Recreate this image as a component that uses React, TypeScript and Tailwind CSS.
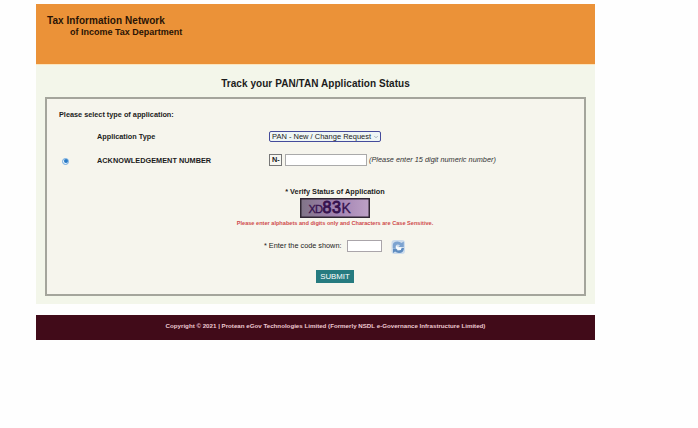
import React, { useState } from 'react';
import { ChevronDown } from 'lucide-react';

function Header() {
  return (
    <header className="h-[60px] bg-[#eb9238] pl-[11px] pt-[11px] font-bold text-[#2a1405]">
      <div className="h-[12px] text-[10px] leading-[12px] tracking-[0.06px] whitespace-nowrap">Tax Information Network</div>
      <div className="pl-[23px] text-[9px] leading-[11px] whitespace-nowrap">of Income Tax Department</div>
    </header>
  );
}

function Captcha() {
  return (
    <svg width="70" height="20" viewBox="0 0 70 20" className="block">
      <defs>
        <linearGradient id="captcha" x1="0" x2="1">
          <stop offset="0" stopColor="#807487" />
          <stop offset="0.5" stopColor="#a080b0" />
          <stop offset="1" stopColor="#bda1c6" />
        </linearGradient>
      </defs>
      <rect x="0.75" y="0.75" width="68.5" height="18.5" fill="url(#captcha)" stroke="#302633" strokeWidth="1.5" />
      <text y="14.5" fill="#36124f" stroke="#36124f" strokeWidth="0.3" fontFamily="Liberation Sans Narrow, Liberation Sans">
        <tspan x="8.5" fontSize="11">X</tspan>
        <tspan x="15" fontSize="11">D</tspan>
        <tspan x="22.5" y="15" fontSize="16" strokeWidth="0.9">8</tspan>
        <tspan x="32" y="15" fontSize="16" strokeWidth="0.9">3</tspan>
        <tspan x="41.5" y="14.5" fontSize="14">K</tspan>
      </text>
    </svg>
  );
}

function RefreshIcon() {
  return (
    <svg width="15" height="16" viewBox="0 0 15 16" className="block">
      <rect x="0.5" y="1" width="13.5" height="14" rx="3" fill="#cddcec" />
      <path d="M1.8 9V6Q2 2.5 6.5 2.5Q9 2.5 10.5 4L12.8 2.4V8H7.6L9 6.3Q8 5.4 6.7 5.4Q4.6 5.4 4.6 7.5V9Z" fill="#7da3d0" />
      <path d="M13 9Q12.8 14 8 14Q5.7 14 4.1 12.6L2 14V9.6H6L5.8 11Q6.7 11.6 8 11.6Q10 11.6 10.6 9Z" fill="#5e8cc0" />
      <path d="M5 7L7.4 8.2H10.6L9.8 11H7.3L5 9.5Z" fill="#f8fbfe" />
    </svg>
  );
}

export default function App() {
  const [ackNumber, setAckNumber] = useState('');
  const [code, setCode] = useState('');

  return (
    <div className="h-[428px] overflow-hidden bg-[#fefefe] pl-[36px] pt-[4px] font-['Liberation_Sans',Arial,sans-serif] text-[#1c1c1c]">
      <div className="w-[559px]">
        <Header />
        <main className="h-[240px] border-t border-[#fce5bd] bg-[#f3f6ea] px-[9px]">
          <h1 className="h-[32px] pt-[13px] text-center text-[10px] leading-[12px] font-bold tracking-[0.06px]">
            Track your PAN/TAN Application Status
          </h1>
          <form
            onSubmit={(e) => e.preventDefault()}
            className="h-[199px] border-2 border-[#a4a59c] bg-[#f6f5ed] pl-[12px] pt-[11px] text-[7.3px] leading-[10px]"
          >
            <p className="h-[10px] font-bold">Please select type of application:</p>
            <div className="mt-[11px] flex h-[12px] items-center pl-[38px]">
              <label className="w-[172px] font-bold">Application Type</label>
              <div className="relative mb-[2px]">
                <select className="block h-[11px] w-[112px] appearance-none rounded-[2px] border border-[#454b9b] bg-[#eef6f5] pl-[2px] text-[7.5px] leading-[9px] text-[#222]">
                  <option>PAN - New / Change Request</option>
                </select>
                <ChevronDown className="pointer-events-none absolute top-[3px] right-[2px] h-[6px] w-[6px] text-[#5c7187]" />
              </div>
            </div>
            <div className="mt-[10px] flex h-[14px] items-center pl-[3px]">
              <span className="mt-[2px] flex h-[7px] w-[7px] items-center justify-center rounded-full border border-[#71a9df] bg-[#e7f3fb]">
                <span className="h-[4px] w-[4px] shrink-0 rounded-full bg-[#2879c5]" />
              </span>
              <label className="ml-[28px] w-[172px] pt-[2px] font-bold tracking-[0.03px]">ACKNOWLEDGEMENT NUMBER</label>
              <span className="h-[12px] w-[13px] border border-[#777] bg-[#f7f7f1] pl-[2px] font-bold">N-</span>
              <input
                value={ackNumber}
                onChange={(e) => setAckNumber(e.target.value)}
                className="ml-[3px] h-[12px] w-[82px] border border-[#aaa] bg-white px-[2px]"
              />
              <em className="ml-[2px] whitespace-nowrap tracking-[0.02px] text-[#333]">(Please enter 15 digit numeric number)</em>
            </div>
            <div className="mt-[20px] ml-[27px] flex w-[498px] flex-col items-center">
              <p className="h-[11px] text-[7.3px] font-bold">* Verify Status of Application</p>
              <Captcha />
              <p className="mt-px text-[5.6px] leading-[9px] font-bold whitespace-nowrap text-[#cf4b4b]">
                Please enter alphabets and digits only and Characters are Case Sensitive.
              </p>
            </div>
            <div className="mt-[10px] flex h-[16px] items-center pl-[205px]">
              <label className="w-[83px] whitespace-nowrap">* Enter the code shown:</label>
              <input
                value={code}
                onChange={(e) => setCode(e.target.value)}
                className="h-[12px] w-[35px] border border-[#aaa5aa] bg-white px-[2px]"
              />
              <button type="button" aria-label="Refresh" className="mt-[2px] ml-[9px]">
                <RefreshIcon />
              </button>
            </div>
            <button type="submit" className="mt-[16px] ml-[257px] block h-[13px] w-[38px] bg-[#267b80] text-center text-[7.8px] leading-[13px] text-white">
              SUBMIT
            </button>
          </form>
        </main>
        <footer className="mt-[11px] flex h-[25px] items-center justify-center bg-[#410b19] pb-[3px] pl-[20px] text-[6.18px] font-bold whitespace-nowrap text-[#edc8d1]">
          Copyright © 2021 | Protean eGov Technologies Limited (Formerly NSDL e-Governance Infrastructure Limited)
        </footer>
      </div>
    </div>
  );
}
